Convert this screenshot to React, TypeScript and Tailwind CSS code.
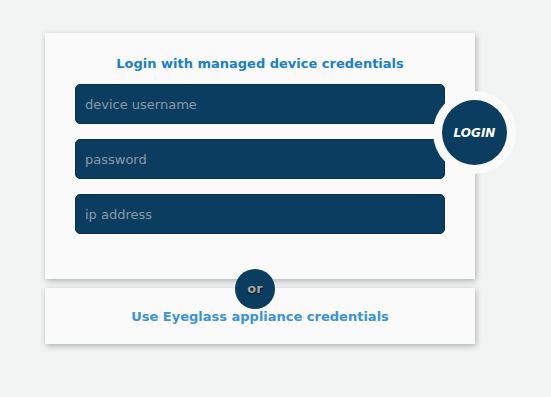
const fields = ['device username', 'password', 'ip address'];

export default function App() {
    return (
        <div className="min-h-[397px] w-[551px] bg-[#f2f4f4] pt-[33px] pl-[45px] font-['DejaVu_Sans',Verdana,sans-serif]">
            <div className="relative w-[430px]">
                {/* managed device login */}
                <div className="relative h-[246px] bg-[#fafafa] shadow-[1px_2px_6px_rgba(0,0,0,0.28)] pt-[23px]">
                    <h2 className="text-center text-[13px] leading-[16px] font-bold text-[#1b7fcf]">
                        Login with managed device credentials
                    </h2>
                    <div className="mt-[12px] flex flex-col gap-[15px] px-[30px]">
                        {fields.map((f) => (
                            <input
                                key={f}
                                type={f === 'password' ? 'password' : 'text'}
                                placeholder={f}
                                className="h-[40px] w-full rounded-[5px] border border-[#06304f] bg-[#0b3d61] px-[9px] text-[13px] text-white outline-none placeholder:text-[#8a99a5]"
                            />
                        ))}
                    </div>
                    <div className="absolute left-[388px] top-[58px] flex h-[83px] w-[83px] items-center justify-center rounded-full bg-[#fafafa]">
                        <button className="flex h-[65px] w-[65px] items-center justify-center rounded-full bg-[#0b3d61] text-[12px] font-bold italic text-white">
                            LOGIN
                        </button>
                    </div>
                </div>

                {/* appliance login */}
                <div className="mt-[9px] h-[56px] bg-[#fafafa] pt-[21px] shadow-[1px_2px_6px_rgba(0,0,0,0.28)]">
                    <p className="text-center text-[13px] leading-[16px] font-bold text-[#3a92dc]">
                        Use Eyeglass appliance credentials
                    </p>
                </div>

                <div className="absolute left-[190px] top-[236px] flex h-[40px] w-[40px] items-center justify-center rounded-full bg-[#0b3d61] text-[13px] font-bold text-[#a5a5a5] [text-shadow:0_1px_1px_#000]">
                    or
                </div>
            </div>
        </div>
    );
}
